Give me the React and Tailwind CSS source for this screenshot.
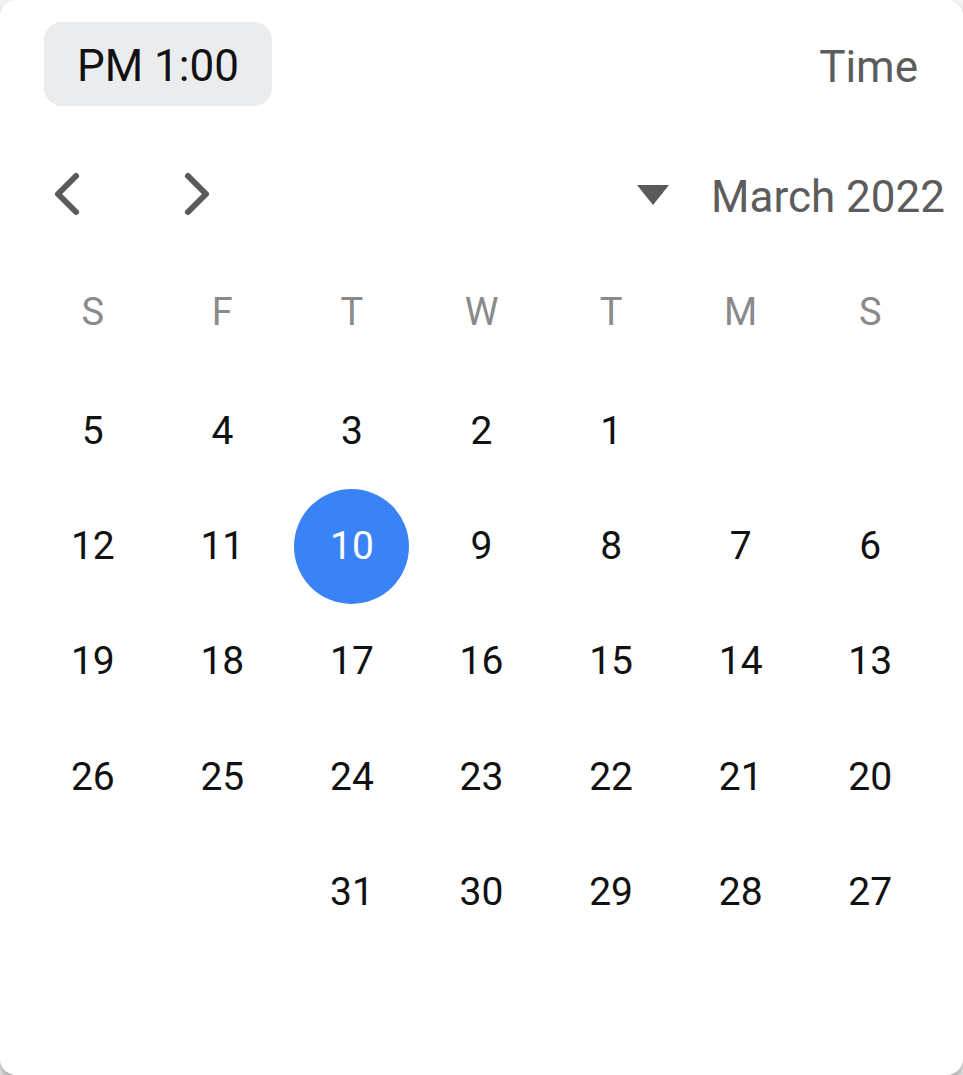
import React from "react";

const weekdays = ["S", "M", "T", "W", "T", "F", "S"]; // Sunday first, laid out RTL
const rows = [
  [null, null, 1, 2, 3, 4, 5],
  [6, 7, 8, 9, 10, 11, 12],
  [13, 14, 15, 16, 17, 18, 19],
  [20, 21, 22, 23, 24, 25, 26],
  [27, 28, 29, 30, 31, null, null],
];

export default function App() {
  return (
    <div
      className="w-[963px] h-[1075px] bg-[#f4f4f4] overflow-hidden"
      style={{ fontFamily: "Roboto, 'Noto Sans', 'Liberation Sans', sans-serif" }}
    >
      <div className="w-full h-full bg-white rounded-[16px] shadow-[0_6px_10px_rgba(0,0,0,0.35)] flex flex-col pt-[22px]">
        {/* top row */}
        <div className="flex items-center justify-between pl-[44px] pr-[45px] h-[84px]">
          <div className="h-[84px] w-[228px] rounded-[18px] bg-[#ebecee] flex items-center justify-center text-[44px] text-[#111] leading-none pt-[3px]">
            PM 1:00
          </div>
          <div className="text-[44px] text-[#5c5c5c] leading-none pt-[5px]">Time</div>
        </div>

        {/* navigation row */}
        <div className="mt-[55px] h-[64px] flex items-center justify-between pl-[51px] pr-[18px]">
          <div className="flex items-center gap-[98px] pt-[1px]">
            <svg width="32" height="48" viewBox="0 0 32 48">
              <polyline
                points="25,6 7,24 25,42"
                fill="none"
                stroke="#5a5a5a"
                strokeWidth="6"
                strokeLinecap="round"
                strokeLinejoin="round"
              />
            </svg>
            <svg width="32" height="48" viewBox="0 0 32 48">
              <polyline
                points="7,6 25,24 7,42"
                fill="none"
                stroke="#5a5a5a"
                strokeWidth="6"
                strokeLinecap="round"
                strokeLinejoin="round"
              />
            </svg>
          </div>
          <div className="flex items-center gap-[42px]">
            <svg width="32" height="20" viewBox="0 0 32 20" className="mt-[4px]">
              <polygon points="0,0 32,0 16,20" fill="#5a5a5a" />
            </svg>
            <div className="text-[44px] text-[#5c5c5c] leading-none pt-[7px]">March 2022</div>
          </div>
        </div>

        {/* weekday header */}
        <div dir="rtl" className="mt-[55px] mx-[28px] grid grid-cols-7 h-[64px] items-center">
          {weekdays.map((d, i) => (
            <div key={i} className="text-center text-[38px] text-[#8a8a8a] leading-none">
              {d}
            </div>
          ))}
        </div>

        {/* days */}
        <div dir="rtl" className="mt-[29px] mx-[28px] grid grid-cols-7">
          {rows.flat().map((d, i) => (
            <div key={i} className="h-[115.4px] flex items-center justify-center">
              {d === null ? null : d === 10 ? (
                <div className="w-[115px] h-[115px] rounded-full bg-[#3a83f7] flex items-center justify-center text-[39px] text-white leading-none">
                  {d}
                </div>
              ) : (
                <div className="text-[39px] text-[#111] leading-none pt-[1px]">{d}</div>
              )}
            </div>
          ))}
        </div>
      </div>
    </div>
  );
}
